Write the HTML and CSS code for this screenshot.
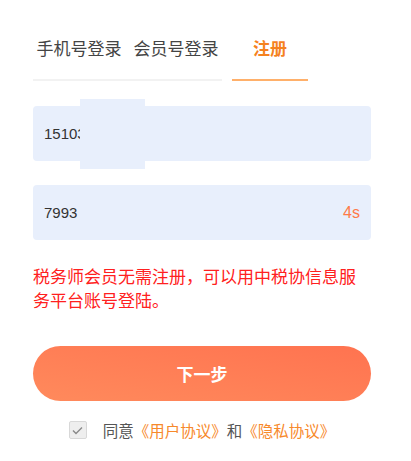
FILE: index.html
```html
<!DOCTYPE html>
<html>
<head>
  <meta charset="utf-8">
  <title>注册</title>
  <link rel="stylesheet" href="styles.css">
</head>
<body>
  <div class="page">
    <div class="tabs">
      <div class="tab-group">
        <span class="tab">手机号登录</span>
        <span class="tab">会员号登录</span>
      </div>
      <div class="tab tab-active">注册</div>
    </div>

    <form class="reg-form">
      <div class="field">
        <input type="text" class="field-input" value="15103">
        <div class="mask"></div>
      </div>

      <div class="field">
        <input type="text" class="field-input" value="7993">
        <span class="countdown">4s</span>
      </div>

      <p class="notice">税务师会员无需注册，可以用中税协信息服务平台账号登陆。</p>

      <button type="button" class="btn-next">下一步</button>

      <label class="agree">
        <span class="check">
          <svg width="11" height="9" viewBox="0 0 11 9"><path d="M1 4.5 L4 7.5 L10 1.5" fill="none" stroke="#8a8a8a" stroke-width="1.4"/></svg>
        </span>
        同意<a class="link">《用户协议》</a>和<a class="link">《隐私协议》</a>
      </label>
    </form>
  </div>
</body>
</html>
```

FILE: styles.css
```css
body {
  margin: 0;
  background: #fff;
  font-family: "Noto Sans CJK SC", "Liberation Sans", sans-serif;
  color: #333;
}

.page {
  width: 338px;
  margin-left: 33px;
}

.tabs {
  display: flex;
  align-items: flex-end;
}

.tab-group {
  display: flex;
  gap: 12px;
  width: 189px;
  justify-content: center;
  border-bottom: 2px solid #f2f2f2;
}

.tab {
  font-size: 17px;
  line-height: 24px;
  padding: 36px 0 19px;
  color: #444;
}

.tab-active {
  width: 76px;
  margin-left: 10px;
  text-align: center;
  color: #f5821f;
  font-weight: bold;
  border-bottom: 2px solid #ffb06a;
}

.reg-form {
  margin-top: 25px;
}

.field {
  position: relative;
  display: flex;
  align-items: center;
  height: 55px;
  background: #e8effc;
  border-radius: 4px;
  margin-bottom: 24px;
}

.field-input {
  flex: 1;
  border: none;
  background: transparent;
  outline: none;
  padding: 0 11px;
  font-family: "Liberation Sans", Arial, sans-serif;
  font-size: 15px;
  color: #333;
}

.mask {
  position: absolute;
  left: 47px;
  top: -7px;
  width: 65px;
  height: 70px;
  background: #e8effc;
}

.countdown {
  padding-right: 11px;
  font-family: "Liberation Sans", Arial, sans-serif;
  font-size: 16px;
  color: #ff7a48;
}

.notice {
  margin: 0;
  font-size: 17px;
  line-height: 24px;
  color: #ff2020;
}

.btn-next {
  display: block;
  width: 100%;
  height: 55px;
  margin-top: 34px;
  border: none;
  border-radius: 28px;
  background: linear-gradient(to bottom left, #ff7350, #ff8a5c);
  color: #fff;
  font-family: "Noto Sans CJK SC", sans-serif;
  font-size: 17px;
  font-weight: bold;
}

.agree {
  display: flex;
  align-items: center;
  justify-content: center;
  margin-top: 20px;
  font-size: 15.5px;
  line-height: 18px;
  color: #555;
}

.check {
  display: inline-flex;
  align-items: center;
  justify-content: center;
  width: 16px;
  height: 16px;
  margin-right: 16px;
  background: #eee;
  border: 1px solid #d8d8d8;
  border-radius: 2px;
}

.link {
  color: #f7892b;
}
```
